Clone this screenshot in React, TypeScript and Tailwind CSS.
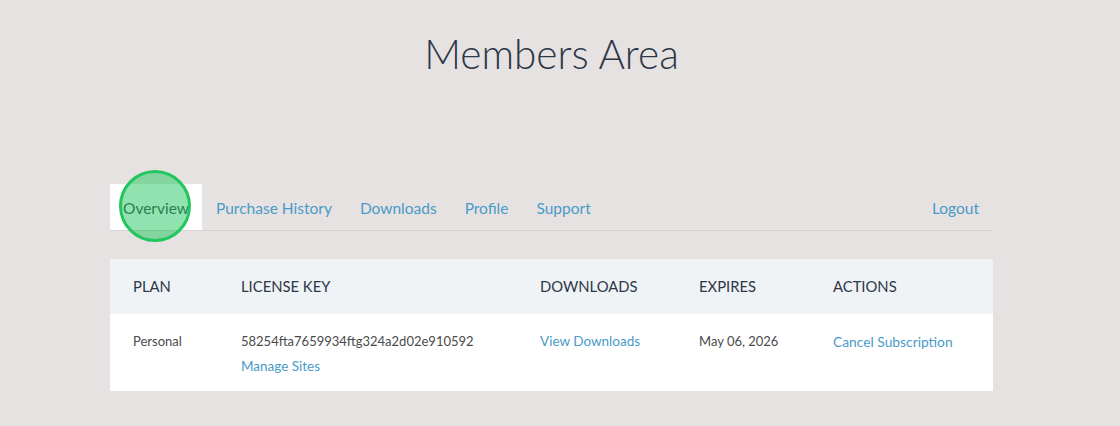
import React from "react";

export default function App() {
  const navItems = ["Purchase History", "Downloads", "Profile", "Support"];
  return (
    <div className="min-h-[426px] w-full bg-[#e6e2e2] font-['Lato',sans-serif] text-[#2d3748]">
      <div className="w-[1103px]">
        <h1 className="pt-[28px] text-center text-[40.5px] font-light leading-[52px] text-[#2d3748]">
          Members Area
        </h1>
        <div className="mx-auto mt-[104px] w-[883px]">
          <nav className="flex h-[47px] items-stretch border-b border-[#d6d2d2] text-[15.5px]">
            <div className="relative flex items-center bg-white px-[13px] pt-[4px] text-[#2d3748]">
              <span className="relative z-0">Overview</span>
              <span className="absolute left-[9px] top-[-14px] z-10 h-[72px] w-[72px] rounded-full border-[3px] border-[#22c55e] bg-[#22c55e]/50" />
            </div>
            {navItems.map((n) => (
              <a key={n} className="flex items-center px-[14px] pt-[4px] text-[#4a9bc7]">
                {n}
              </a>
            ))}
            <a className="ml-auto flex items-center px-[14px] pt-[4px] text-[#4a9bc7]">Logout</a>
          </nav>
          <div className="mt-[28px] bg-white">
            <div className="grid h-[55px] grid-cols-[108px_299px_159px_134px_1fr] items-center bg-[#eff3f6] pl-[23px] text-[14.8px] text-[#2d3748]">
              <div>PLAN</div>
              <div>LICENSE KEY</div>
              <div>DOWNLOADS</div>
              <div>EXPIRES</div>
              <div>ACTIONS</div>
            </div>
            <div className="grid h-[77px] grid-cols-[108px_299px_159px_134px_1fr] items-start pl-[23px] pt-[15px] text-[13px] leading-[25px] text-[#4a4a4a]">
              <div>Personal</div>
              <div className="flex flex-col">
                <span>58254fta7659934ftg324a2d02e910592</span>
                <a className="text-[13.5px] text-[#4a9bc7]">Manage Sites</a>
              </div>
              <a className="text-[13.5px] text-[#4a9bc7]">View Downloads</a>
              <div>May 06, 2026</div>
              <a className="text-[13.8px] text-[#4a9bc7]">Cancel Subscription</a>
            </div>
          </div>
        </div>
      </div>
    </div>
  );
}
